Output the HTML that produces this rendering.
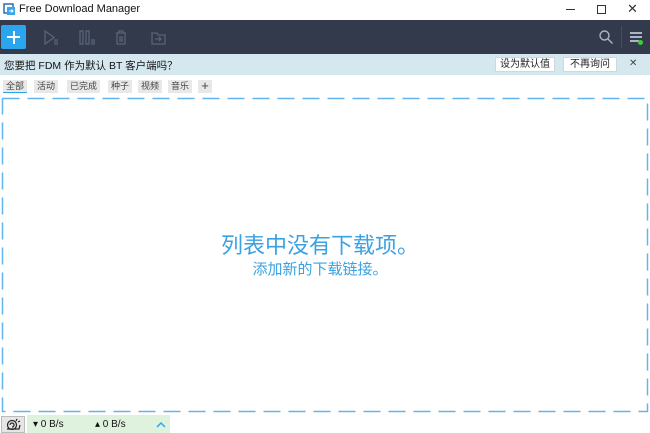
<!DOCTYPE html>
<html><head><meta charset="utf-8"><style>
*{margin:0;padding:0;box-sizing:border-box}
body{width:650px;height:433px;background:#fff;font-family:"Liberation Sans","Noto Sans CJK SC",sans-serif;position:relative;overflow:hidden}
.abs{position:absolute}
.tab{position:absolute;top:80px;height:13px;background:#e8e8e8;font-size:9px;line-height:13px;text-align:center;color:#444}
.btn{position:absolute;top:57px;height:15px;background:#fff;border:1px solid #cfd8dc;font-size:10px;line-height:13px;text-align:center;color:#222}
</style></head><body>
<!-- title -->
<svg class="abs" style="left:3px;top:3px" width="13" height="13" viewBox="0 0 13 13"><rect x="1" y="1" width="9" height="9" fill="none" stroke="#2a6cb0" stroke-width="1.5"/><rect x="4" y="4" width="8" height="8" fill="#3aa8e8"/><path d="M6 8h4M8.5 6.5l1.5 1.5-1.5 1.5" stroke="#fff" stroke-width="1" fill="none"/></svg>
<div class="abs" style="left:19px;top:3px;font-size:11px;color:#111">Free Download Manager</div>
<div class="abs" style="left:566px;top:9px;width:9px;height:1px;background:#333"></div>
<div class="abs" style="left:597px;top:5px;width:9px;height:9px;border:1px solid #333"></div>
<div class="abs" style="left:627px;top:1px;font-size:13px;color:#333">✕</div>
<!-- toolbar -->
<div class="abs" style="left:0;top:20px;width:650px;height:34px;background:#333a4b"></div>
<div class="abs" style="left:1px;top:25px;width:25px;height:24px;background:#2ba6ee;border-radius:2px"></div>
<div class="abs" style="left:7px;top:36px;width:13px;height:2px;background:#fff"></div>
<div class="abs" style="left:12.5px;top:30.5px;width:2px;height:13px;background:#fff"></div>
<svg class="abs" style="left:40px;top:28px" width="140" height="20" fill="none" stroke="#5a6478" stroke-width="1.3">
<path d="M5 3v13l9-6.5z"/><path d="M14 12h4M14 14h4M14 16h4"/>
<rect x="40" y="3" width="3" height="13"/><rect x="46" y="3" width="3" height="13"/><path d="M51 12h4M51 14h4M51 16h4"/>
<path d="M76 5h10M79 5V3h4v2M77 5v11h8V5M80 8v6M82 8v6"/>
<path d="M112 5h5l1 2h7v9h-13z"/><path d="M115 11h6M119 9l2 2-2 2"/>
</svg>
<svg class="abs" style="left:598px;top:29px" width="16" height="16" fill="none" stroke="#aab4c4" stroke-width="1.4"><circle cx="6.5" cy="6.5" r="4.5"/><path d="M10 10l4.5 4.5"/></svg>
<div class="abs" style="left:621px;top:26px;width:1px;height:22px;background:#444c5e"></div>
<div class="abs" style="left:630px;top:32px;width:12px;height:2px;background:#aab4c4"></div>
<div class="abs" style="left:630px;top:36px;width:12px;height:2px;background:#aab4c4"></div>
<div class="abs" style="left:630px;top:40px;width:9px;height:2px;background:#aab4c4"></div>
<div class="abs" style="left:638px;top:40px;width:5px;height:5px;border-radius:50%;background:#3ccf2f"></div>
<!-- notification -->
<div class="abs" style="left:0;top:54px;width:650px;height:21px;background:#d6e8ef"></div>
<div class="abs" style="left:4px;top:58px;font-size:10.5px;color:#111">您要把 FDM 作为默认 BT 客户端吗？</div>
<div class="btn" style="left:495px;width:60px">设为默认值</div>
<div class="btn" style="left:563px;width:54px">不再询问</div>
<div class="abs" style="left:629px;top:58px;font-size:10px;color:#444">✕</div>
<!-- tabs -->
<div class="tab" style="left:3px;width:24px;border-bottom:1px solid #2ba6ee">全部</div>
<div class="tab" style="left:34px;width:24px">活动</div>
<div class="tab" style="left:67px;width:33px">已完成</div>
<div class="tab" style="left:108px;width:24px">种子</div>
<div class="tab" style="left:138px;width:24px">视频</div>
<div class="tab" style="left:168px;width:24px">音乐</div>
<div class="tab" style="left:198px;width:14px;font-size:13px;line-height:12px">+</div>
<!-- dashed -->
<svg class="abs" style="left:0;top:96px" width="650" height="318"><rect x="2.5" y="2.5" width="645" height="313" fill="none" stroke="#62b4ea" stroke-width="1.5" stroke-dasharray="17 8"/></svg>
<div class="abs" style="left:-5px;top:228px;width:650px;text-align:center;font-size:22px;color:#3aa2e2">列表中没有下载项。</div>
<div class="abs" style="left:-5px;top:258px;width:650px;text-align:center;font-size:15px;color:#3aa2e2">添加新的下载链接。</div>
<!-- status -->
<div class="abs" style="left:1px;top:416px;width:24px;height:17px;background:#e6e6e6;border:1px solid #bbb"></div>
<svg class="abs" style="left:5px;top:418px" width="16" height="13" fill="none" stroke="#222" stroke-width="1.2"><circle cx="7" cy="7" r="4.5"/><path d="M7 7m-2 0a2 2 0 1 1 2 2"/><path d="M2 11h12l1-4M11 3l1-2M13 4l2-1"/></svg>
<div class="abs" style="left:27px;top:415px;width:143px;height:18px;background:#dff2de"></div>
<div class="abs" style="left:33px;top:419px;font-size:10px;color:#111">▾ 0 B/s</div>
<div class="abs" style="left:95px;top:419px;font-size:10px;color:#111">▴ 0 B/s</div>
<svg class="abs" style="left:156px;top:421px" width="10" height="7" fill="none" stroke="#2ba6ee" stroke-width="1.5"><path d="M1 6l4-4 4 4"/></svg>
</body></html>
